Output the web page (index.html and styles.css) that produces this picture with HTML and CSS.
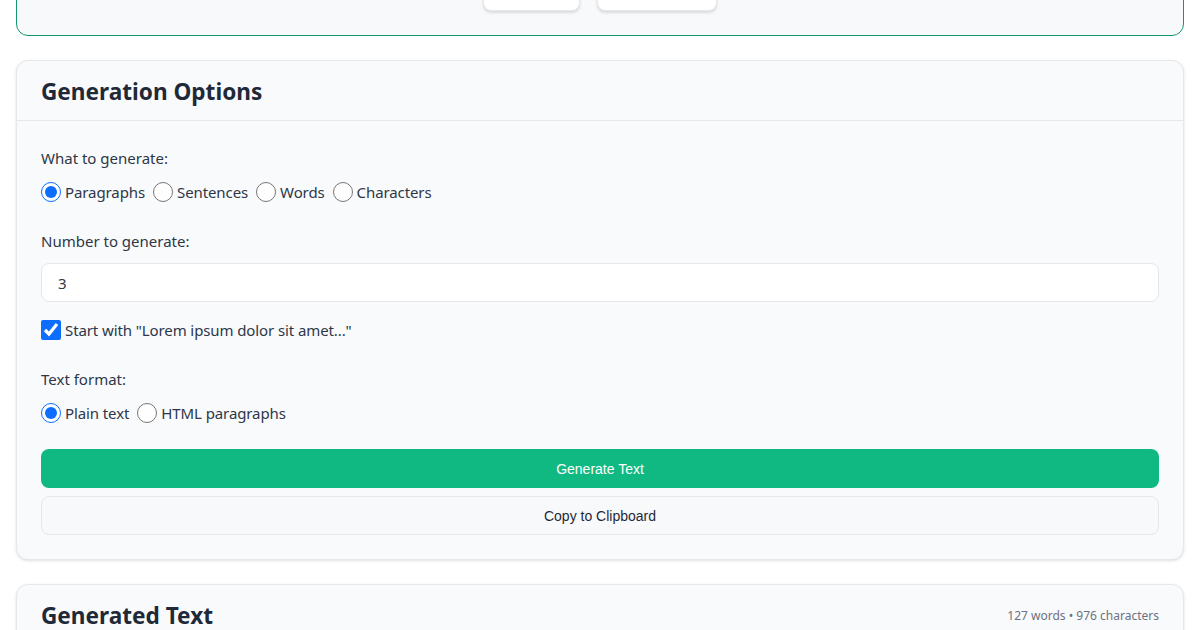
FILE: index.html
```html
<!DOCTYPE html>
<html lang="en">
<head>
    <meta charset="UTF-8">
    <meta name="viewport" content="width=device-width, initial-scale=1.0">
    <title>Lorem Ipsum Generator</title>
    <link rel="stylesheet" href="styles.css">
</head>
<body>
    <div class="container">
        <!-- top card (scrolled mostly out of view) -->
        <section class="hero-card">
            <div class="hero-actions">
                <button class="chip-btn chip-small">Copy</button>
                <button class="chip-btn chip-wide">Download</button>
            </div>
        </section>

        <section class="card">
            <div class="card-header">
                <h2>Generation Options</h2>
            </div>
            <div class="card-body">
                <div class="form-group">
                    <span class="field-label">What to generate:</span>
                    <div class="choice-row">
                        <label class="choice"><input type="radio" name="type" checked> Paragraphs</label>
                        <label class="choice"><input type="radio" name="type"> Sentences</label>
                        <label class="choice"><input type="radio" name="type"> Words</label>
                        <label class="choice"><input type="radio" name="type"> Characters</label>
                    </div>
                </div>

                <div class="form-group tight">
                    <label class="field-label" for="count">Number to generate:</label>
                    <input type="text" id="count" class="text-input" value="3">
                </div>

                <div class="form-group">
                    <div class="choice-row">
                        <label class="choice"><input type="checkbox" checked> Start with "Lorem ipsum dolor sit amet..."</label>
                    </div>
                </div>

                <div class="form-group last">
                    <span class="field-label">Text format:</span>
                    <div class="choice-row">
                        <label class="choice"><input type="radio" name="format" checked> Plain text</label>
                        <label class="choice"><input type="radio" name="format"> HTML paragraphs</label>
                    </div>
                </div>

                <button class="btn btn-primary">Generate Text</button>
                <button class="btn btn-secondary">Copy to Clipboard</button>
            </div>
        </section>

        <section class="card">
            <div class="card-header header-split">
                <h2>Generated Text</h2>
                <span class="stats">127 words &bull; 976 characters</span>
            </div>
            <div class="card-body">
                <p class="output">Lorem ipsum dolor sit amet, consectetur adipiscing elit.</p>
            </div>
        </section>
    </div>
</body>
</html>
```

FILE: styles.css
```css
/* styles.css */
body {
    font-family: "Noto Sans", Arial, sans-serif;
    margin: 0;
    padding: 0;
    background-color: #ffffff;
    color: #2d3748;
}

.container {
    padding: 0 16px;
}

.hero-card {
    margin-top: -50px;
    padding: 24px;
    background-color: #f8f9fa;
    border: 1px solid #159570;
    border-radius: 12px;
}

.hero-actions {
    display: flex;
    justify-content: center;
    gap: 17px;
}

.chip-btn {
    height: 36px;
    background-color: #fff;
    border: 1px solid #e5e7eb;
    border-radius: 8px;
    box-shadow: 0 2px 3px rgba(0, 0, 0, 0.12);
    font-family: "Noto Sans", sans-serif;
    font-size: 14px;
    font-weight: 600;
    color: #1f2937;
    padding: 0;
}

.chip-small {
    width: 97px;
    text-align: left;
    padding-left: 12px;
    padding-bottom: 6px;
}

.chip-wide {
    width: 120px;
    color: #fff;
}

.card {
    margin-top: 24px;
    background-color: #f9fafb;
    border: 1px solid #e5e7eb;
    border-radius: 12px;
    box-shadow: 0 1px 3px rgba(0, 0, 0, 0.12);
}

.card-header {
    padding: 17px 24px 15px;
    border-bottom: 1px solid #e5e7eb;
}

.card-header h2 {
    margin: 0;
    font-size: 22.6px;
    line-height: 27px;
    font-weight: 700;
    color: #1f2937;
}

.header-split {
    display: flex;
    justify-content: space-between;
    align-items: center;
}

.stats {
    font-size: 12px;
    color: #6b7280;
}

.card-body {
    padding: 25px 24px 24px;
}

.form-group {
    margin-bottom: 25px;
}

.form-group.tight {
    margin-bottom: 16px;
}

.form-group.last {
    margin-bottom: 24px;
}

.field-label {
    display: block;
    font-size: 15px;
    line-height: 24px;
    margin-bottom: 10px;
}

.choice-row {
    display: flex;
    flex-wrap: wrap;
    gap: 8px;
}

.choice {
    display: inline-flex;
    align-items: center;
    gap: 4px;
    font-size: 15px;
    line-height: 24px;
    letter-spacing: -0.1px;
}

.choice input {
    width: 20px;
    height: 20px;
    margin: 0;
    accent-color: #0d6efd;
}

.text-input {
    display: block;
    box-sizing: border-box;
    width: 100%;
    height: 39px;
    padding: 0 16px;
    font-family: "Noto Sans", sans-serif;
    font-size: 15px;
    color: #2d3748;
    background-color: #fff;
    border: 1px solid #e5e7eb;
    border-radius: 8px;
}

.btn {
    display: block;
    width: 100%;
    height: 39px;
    font-family: Arial, "Liberation Sans", sans-serif;
    font-size: 14px;
    border-radius: 8px;
    cursor: pointer;
}

.btn-primary {
    background-color: #10b981;
    color: #fff;
    border: none;
    margin-bottom: 8px;
}

.btn-secondary {
    background-color: #f8f9fa;
    color: #1f2937;
    border: 1px solid #e5e7eb;
}

.output {
    margin: 0;
    line-height: 1.6;
}
```
